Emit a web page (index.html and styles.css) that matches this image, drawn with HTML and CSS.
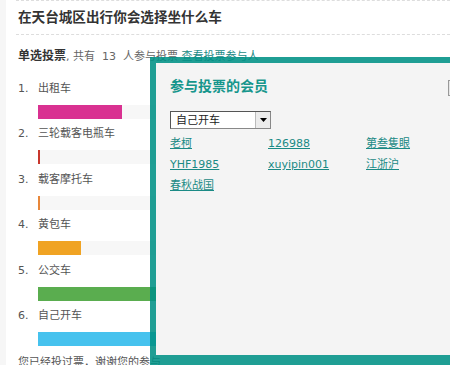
FILE: index.html
```html
<!DOCTYPE html>
<html>
  <head>
    <meta charset="utf-8">
    <title>投票</title>
    <link rel="stylesheet" href="styles.css">
  </head>
  <body>
    <div class="page">
      <div class="poll">
        <h2 class="poll-title">在天台城区出行你会选择坐什么车</h2>
        <p class="poll-summary"><strong>单选投票</strong>, 共有 &nbsp;13 &nbsp;人参与投票 <a href="#">查看投票参与人</a></p>
        <ol class="options">
          <li class="option">
            <div class="option-label"><span class="option-num">1.</span>出租车</div>
            <div class="track"><div class="bar bar-pink" style="width: 84px;"></div></div>
          </li>
          <li class="option">
            <div class="option-label"><span class="option-num">2.</span>三轮载客电瓶车</div>
            <div class="track"><div class="bar bar-red" style="width: 2px;"></div></div>
          </li>
          <li class="option">
            <div class="option-label"><span class="option-num">3.</span>载客摩托车</div>
            <div class="track"><div class="bar bar-orange" style="width: 2px;"></div></div>
          </li>
          <li class="option">
            <div class="option-label"><span class="option-num">4.</span>黄包车</div>
            <div class="track"><div class="bar bar-yellow" style="width: 43px;"></div></div>
          </li>
          <li class="option">
            <div class="option-label"><span class="option-num">5.</span>公交车</div>
            <div class="track"><div class="bar bar-green" style="width: 100%;"></div></div>
          </li>
          <li class="option">
            <div class="option-label"><span class="option-num">6.</span>自己开车</div>
            <div class="track"><div class="bar bar-blue" style="width: 100%;"></div></div>
          </li>
        </ol>
        <p class="poll-note">您已经投过票，谢谢您的参与</p>
      </div>
    </div>

    <div class="voters">
      <span class="voters-close"></span>
      <h3 class="voters-title">参与投票的会员</h3>
      <div class="picker">
        <select class="picker-select">
          <option>自己开车</option>
          <option>出租车</option>
          <option>公交车</option>
        </select>
        <span class="picker-arrow">
          <svg width="7" height="4" viewBox="0 0 7 4"><path d="M0 0h7L3.5 4z" fill="#000"/></svg>
        </span>
      </div>
      <ul class="voter-list">
        <li><a href="#">老柯</a></li>
        <li><a href="#">126988</a></li>
        <li><a href="#">第叁隻眼</a></li>
        <li><a href="#">YHF1985</a></li>
        <li><a href="#">xuyipin001</a></li>
        <li><a href="#">江浙沪</a></li>
        <li><a href="#">春秋战国</a></li>
      </ul>
    </div>
  </body>
</html>
```

FILE: styles.css
```css
body {
  margin: 0;
  background: #f6f6f6;
  font-family: "DejaVu Sans", "Noto Sans CJK SC", sans-serif;
  font-size: 11px;
  color: #555;
  overflow: hidden;
}

a {
  color: #1a8a85;
}

.page {
  background: white;
  margin-left: 6px;
  padding-left: 10px;
  min-height: 365px;
}

.poll-title {
  border-top: 1px dashed #ddd;
  border-bottom: 1px dashed #ddd;
  color: #333;
  font-size: 13.6px;
  font-weight: bold;
  height: 33px;
  line-height: 33px;
  margin: 0;
  padding-left: 2px;
}

.poll-summary {
  color: #666;
  line-height: 18px;
  margin: 12px 0 0;
  padding-left: 2px;
}

.poll-summary strong {
  color: #333;
  font-size: 12px;
}

.poll-summary a {
  text-decoration: none;
}

.options {
  list-style: none;
  margin: 14px 0 0;
  padding: 0 0 0 2px;
}

.option {
  padding-bottom: 6.4px;
}

.option-label {
  line-height: 18px;
}

.option-num {
  display: inline-block;
  width: 20px;
}

.track {
  background: #f7f7f7;
  height: 14px;
  margin-top: 7px;
  margin-left: 20px;
}

.bar {
  height: 14px;
}

.bar-pink { background: #d93191; }
.bar-red { background: #c8372d; }
.bar-orange { background: #e8873a; }
.bar-yellow { background: #f0a323; }
.bar-green { background: #5aad4f; }
.bar-blue { background: #46c2ee; }

.poll-note {
  line-height: 18px;
  margin: 2px 0 0;
  padding-left: 2px;
}

.voters {
  background: #f4f4f4;
  background-clip: padding-box;
  border: 6px solid rgba(0, 145, 133, 0.88);
  border-bottom-width: 10px;
  height: 279px;
  left: 150px;
  padding: 13px 14px 0;
  position: absolute;
  top: 57px;
  width: 272px;
}

.voters-close {
  background: #e6e6e6;
  border: 1px solid #999;
  height: 14px;
  left: 292px;
  position: absolute;
  top: 17px;
  width: 12px;
}

.voters-title {
  color: #16968c;
  font-size: 14px;
  font-weight: bold;
  line-height: 20px;
  margin: 0 0 15px;
}

.picker {
  background: white;
  border: 1px solid #888;
  border-top-color: #555;
  border-left-color: #555;
  display: flex;
  height: 16px;
  margin-bottom: 4px;
  width: 99px;
}

.picker-select {
  appearance: none;
  background: transparent;
  border: 0;
  color: #222;
  flex: 1;
  font-family: inherit;
  font-size: 11px;
  margin: 0;
  outline: none;
  padding: 0 0 0 5px;
}

.picker-arrow {
  align-items: center;
  background: #ececec;
  border-left: 1px solid #bbb;
  display: flex;
  justify-content: center;
  width: 14px;
}

.voter-list {
  display: grid;
  grid-template-columns: repeat(3, 98px);
  line-height: 21px;
  list-style: none;
  margin: 0;
  padding: 0;
}
```
